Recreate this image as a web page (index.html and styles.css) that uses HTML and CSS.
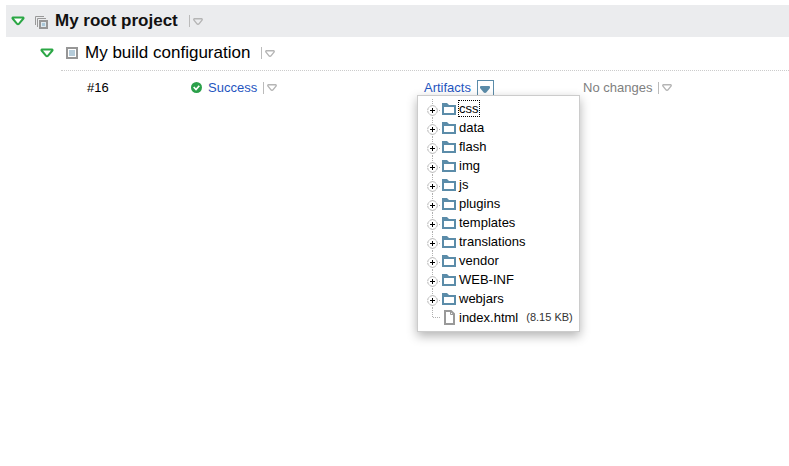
FILE: index.html
```html
<!DOCTYPE html>
<html lang="en">
<head>
<meta charset="utf-8">
<title>My root project</title>
<link rel="stylesheet" href="styles.css">
</head>
<body>
<svg class="defs" aria-hidden="true">
  <symbol id="tri" viewBox="0 0 14 10"><path d="M2 1.5h10a.6.6 0 0 1 .4 1L7.9 7.9a1.2 1.2 0 0 1-1.8 0L1.6 2.5a.6.6 0 0 1 .4-1z" fill="#fff" stroke="#2ba745" stroke-width="2"/></symbol>
  <symbol id="caret" viewBox="0 0 10 7"><path d="M1.2.8h7.6q.9.6 0 1.6L6.2 5.6a1.5 1.5 0 0 1-2.4 0L1.2 2.4Q.3 1.4 1.2.8z" fill="none" stroke="currentColor" stroke-width="1.4"/></symbol>
  <symbol id="folder" viewBox="0 0 14 12"><path d="M0 0h5l2 2h7v10H0zM2 4v6h10V4z" fill="#5b8ca9" fill-rule="evenodd"/></symbol>
  <symbol id="plus" viewBox="0 0 14 19"><path d="M5.5 0v19M12 11.5h1" stroke="#b0b0b0" stroke-dasharray="1 1" fill="none"/><circle cx="5.5" cy="11.5" r="4.8" fill="#fff" stroke="#b4b4b4" stroke-dasharray="3 .77"/><path d="M3 11.5h5M5.5 9v5" stroke="#000"/></symbol>
</svg>
<main class="page">
  <header class="project">
    <button class="icon-button" aria-label="Collapse project"><svg class="tri"><use href="#tri"/></svg></button>
    <svg class="project-icon" viewBox="0 0 13 13"><path d="M.5 9V.5H9M2.5 11V2.5H11" fill="none" stroke="#999"/><path d="M4 4h9v9H4z" fill="#969696"/><path d="M6 6h5v5H6z" fill="#dfe8ed"/><path d="M7 7h3v3H7z" fill="#a9c7d8"/></svg>
    <h1>My root project</h1>
    <button class="more more-wide" aria-label="Project menu"><svg class="caret"><use href="#caret"/></svg></button>
  </header>
  <section class="config">
    <div class="config-head">
      <button class="icon-button" aria-label="Collapse configuration"><svg class="tri"><use href="#tri"/></svg></button>
      <svg class="config-icon" viewBox="0 0 12 12"><path d="M0 0h12v12H0z" fill="#969696"/><path d="M2 2h8v8H2z" fill="#fff"/><path d="M3 3h6v6H3z" fill="#b5ccda"/></svg>
      <h2>My build configuration</h2>
      <button class="more more-wide" aria-label="Configuration menu"><svg class="caret"><use href="#caret"/></svg></button>
    </div>
    <div class="build">
      <span>#16</span>
      <div class="cell">
        <svg class="status" viewBox="0 0 11 11"><circle cx="5.5" cy="5.5" r="5.5" fill="#2ba04a"/><path d="M2.7 5l2.3 2.5L8.3 3.7" fill="none" stroke="#fff" stroke-width="1.7"/></svg>
        <a href="#success">Success</a>
        <button class="more" aria-label="Build menu"><svg class="caret"><use href="#caret"/></svg></button>
      </div>
      <div class="cell artifacts">
        <a href="#artifacts">Artifacts</a>
        <button class="open" aria-label="Artifacts menu" aria-expanded="true"><svg viewBox="0 0 10 7"><path d="M1 0h8q1 0 1 1v1L6.5 6.3Q5 7.5 3.5 6.3L0 2V1Q0 0 1 0z" fill="#5b8ca9"/></svg></button>
        <ul class="popup">
          <li><svg class="plus"><use href="#plus"/></svg><svg class="folder"><use href="#folder"/></svg><span class="focused">css</span></li>
          <li><svg class="plus"><use href="#plus"/></svg><svg class="folder"><use href="#folder"/></svg><span>data</span></li>
          <li><svg class="plus"><use href="#plus"/></svg><svg class="folder"><use href="#folder"/></svg><span>flash</span></li>
          <li><svg class="plus"><use href="#plus"/></svg><svg class="folder"><use href="#folder"/></svg><span>img</span></li>
          <li><svg class="plus"><use href="#plus"/></svg><svg class="folder"><use href="#folder"/></svg><span>js</span></li>
          <li><svg class="plus"><use href="#plus"/></svg><svg class="folder"><use href="#folder"/></svg><span>plugins</span></li>
          <li><svg class="plus"><use href="#plus"/></svg><svg class="folder"><use href="#folder"/></svg><span>templates</span></li>
          <li><svg class="plus"><use href="#plus"/></svg><svg class="folder"><use href="#folder"/></svg><span>translations</span></li>
          <li><svg class="plus"><use href="#plus"/></svg><svg class="folder"><use href="#folder"/></svg><span>vendor</span></li>
          <li><svg class="plus"><use href="#plus"/></svg><svg class="folder"><use href="#folder"/></svg><span>WEB-INF</span></li>
          <li><svg class="plus"><use href="#plus"/></svg><svg class="folder"><use href="#folder"/></svg><span>webjars</span></li>
          <li><svg class="plus" viewBox="0 0 14 19"><path d="M5.5 0v9.5H13" fill="none" stroke="#b0b0b0" stroke-dasharray="1 1"/></svg><svg class="file" viewBox="0 0 14 15"><path d="M3 1h6l3 3v10H3z" fill="#fff" stroke="#999" stroke-width="2"/><path d="M8.5 1v3.500H12" fill="none" stroke="#999"/></svg><span>index.html</span><small>(8.15 KB)</small></li>
        </ul>
      </div>
      <div class="cell muted">
        <span>No changes</span>
        <button class="more" aria-label="Changes menu"><svg class="caret"><use href="#caret"/></svg></button>
      </div>
    </div>
  </section>
</main>
</body>
</html>
```
FILE: styles.css
```css
* { box-sizing: border-box; }
body {
  margin: 0;
  background: #fff;
  color: #000;
  font: 13px/19px "Liberation Sans", Arial, sans-serif;
}
svg { display: block; flex: none; }
.defs { position: absolute; width: 0; height: 0; }
button { padding: 0; border: 0; background: none; font: inherit; color: inherit; }
a { color: #1f55c0; text-decoration: none; }
.page { min-height: 100vh; padding: 5px 0 0 6px; }
.project, .config-head, .cell { display: flex; align-items: center; }
.project { height: 32px; padding: 0 5px; background: #ebecee; color: #111; }
.tri { width: 14px; height: 10px; }
.project-icon { width: 13px; height: 13px; margin: 3px 7px 0 10px; }
h1, h2 { margin: 0; font-size: 17px; line-height: 24px; white-space: nowrap; }
h2 { font-weight: 400; }
.more {
  display: flex;
  align-items: center;
  height: 12px;
  margin-left: 6px;
  padding-left: 3px;
  border-left: 1px solid #bbb;
  color: #b5b5b5;
}
.more-wide { margin-left: 11px; }
.caret { width: 10px; height: 7px; }
.config-head { height: 32px; margin: 0 0 1px 34px; }
.config-icon { width: 12px; height: 12px; margin: 0 7px 0 12px; }
.build {
  display: grid;
  grid-template-columns: 104fr 233fr 159fr 206fr;
  margin-left: 55px;
  padding: 7px 0 0 26px;
  border-top: 1px dotted #ccc;
}
.status { width: 11px; height: 11px; margin-right: 6px; }
.artifacts { position: relative; }
.open {
  display: flex;
  align-items: center;
  justify-content: center;
  align-self: flex-end;
  width: 17px;
  height: 17px;
  margin-left: 6px;
  border: 1px solid #5b8ca9;
  border-bottom: 0;
}
.open svg { width: 10px; height: 7px; }
.muted { color: #808080; }
.popup {
  position: absolute;
  top: 17px;
  left: -7px;
  width: max-content;
  margin: 0;
  padding: 3px 6px 4px 9px;
  border: 1px solid #ccc;
  background: #fff;
  box-shadow: 0 4px 10px rgba(0, 0, 0, .3);
  color: #000;
  list-style: none;
}
.popup li { display: flex; align-items: center; height: 19px; }
.plus { width: 14px; height: 19px; }
.folder { width: 14px; height: 12px; margin: 1px 3px 0 1px; }
.file { width: 14px; height: 15px; margin: 0 3px 0 1px; }
.focused { line-height: 15px; outline: 1px dotted #000; }
small { margin-left: 8px; font-size: 11px; color: #333; }
```
